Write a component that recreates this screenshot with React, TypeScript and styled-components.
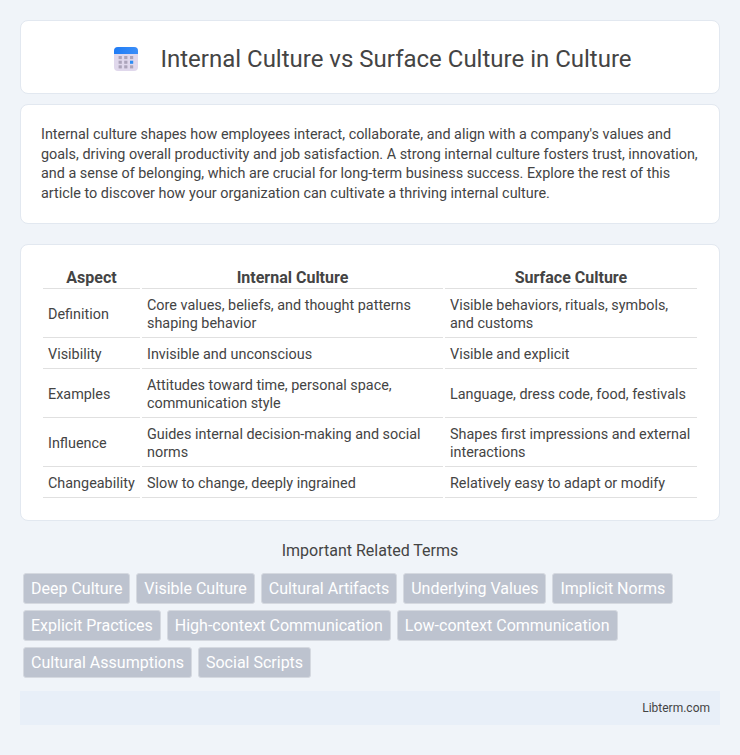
import React from "react";
import styled, { createGlobalStyle } from "styled-components";

const Global = createGlobalStyle`
  html, body { margin: 0; padding: 0; background: #f0f4f9; }
  body { font-family: Roboto, "Liberation Sans", sans-serif; color: #444; }
`;
const Page = styled.div`
  padding: 20px 20px 30px;
  display: flex;
  flex-direction: column;
`;
const Card = styled.section<{ $mb: number }>`
  background: #fff;
  border: 1px solid #e2e8f0;
  border-radius: 8px;
  margin-bottom: ${(p) => p.$mb}px;
`;
const Header = styled(Card)`
  height: 74px;
  box-sizing: border-box;
  padding: 4px 0 0 6px;
  display: flex;
  align-items: center;
  justify-content: center;
  gap: 22px;
`;
const Title = styled.h1`
  margin: 0;
  font-size: 24px;
  font-weight: 400;
  color: #444;
  line-height: 28px;
`;
const Summary = styled(Card)`
  padding: 20px;
  height: 120px;
  box-sizing: border-box;
`;
const SummaryText = styled.p`
  margin: 0;
  font-size: 14.4px;
  line-height: 19.5px;
  color: #444;
`;
const TableCard = styled(Card)`
  padding: 17px 20px 20px;
  height: 277px;
  box-sizing: border-box;
`;
const Table = styled.table`
  width: 100%;
  border-collapse: separate;
  border-spacing: 2px;
  font-size: 14.4px;
  table-layout: fixed;
`;
const Th = styled.th`
  font-size: 16px;
  font-weight: 700;
  color: #444;
  padding: 4px 5px 1px;
  line-height: 19px;
  border-bottom: 1px solid #e0e0e0;
  text-align: center;
`;
const Td = styled.td`
  padding: 6px 5px 4px;
  line-height: 18px;
  color: #444;
  border-bottom: 1px solid #e0e0e0;
  vertical-align: middle;
`;
const TermsTitle = styled.h2`
  margin: 0 0 13px;
  font-size: 16px;
  font-weight: 400;
  line-height: 19px;
  text-align: center;
  color: #444;
`;
const Tags = styled.div`
  display: flex;
  flex-wrap: wrap;
  gap: 6px;
  padding: 0 3px;
  margin-bottom: 13px;
`;
const Tag = styled.span`
  background: #bdc3cf;
  color: #fff;
  border: 1px solid #d5d9e0;
  border-radius: 3px;
  font-size: 16px;
  line-height: 19px;
  padding: 5px 7px;
`;
const Footer = styled.footer`
  background: #e8eff8;
  height: 34px;
  display: flex;
  align-items: center;
  justify-content: flex-end;
  padding: 0 10px;
  font-size: 12px;
  color: #444;
`;

const Icon = () => (
  <svg width="24" height="24" viewBox="0 0 24 24" aria-hidden="true">
    <defs>
      <linearGradient id="calTop" x1="0" y1="0" x2="1" y2="0">
        <stop offset="0" stopColor="#1f7cf5" />
        <stop offset="1" stopColor="#3b8ef8" />
      </linearGradient>
    </defs>
    <rect x="0" y="0" width="24" height="24" rx="4" fill="#e0d8ec" />
    <path d="M0 7V4a4 4 0 0 1 4-4h16a4 4 0 0 1 4 4v3z" fill="url(#calTop)" />
    {[9, 13.7, 18.3].flatMap((y, r) =>
      [4.6, 10.2, 16].map((x, c) => (
        <rect key={`${r}${c}`} x={x} y={y} width="3.2" height="3.1" fill={r === 1 && c === 2 ? "#2c8cf4" : "#aca4ba"} />
      ))
    )}
  </svg>
);

const rows: [string, string, string][] = [
  ["Definition", "Core values, beliefs, and thought patterns shaping behavior", "Visible behaviors, rituals, symbols, and customs"],
  ["Visibility", "Invisible and unconscious", "Visible and explicit"],
  ["Examples", "Attitudes toward time, personal space, communication style", "Language, dress code, food, festivals"],
  ["Influence", "Guides internal decision-making and social norms", "Shapes first impressions and external interactions"],
  ["Changeability", "Slow to change, deeply ingrained", "Relatively easy to adapt or modify"],
];
const terms = ["Deep Culture", "Visible Culture", "Cultural Artifacts", "Underlying Values", "Implicit Norms", "Explicit Practices", "High-context Communication", "Low-context Communication", "Cultural Assumptions", "Social Scripts"];

export default function App() {
  return (
    <Page>
      <Global />
      <Header $mb={10}>
        <Icon />
        <Title>Internal Culture vs Surface Culture in Culture</Title>
      </Header>
      <Summary $mb={20}>
        <SummaryText>
          Internal culture shapes how employees interact, collaborate, and align with a company's values and goals, driving overall productivity and job satisfaction. A strong internal culture fosters trust, innovation, and a sense of belonging, which are crucial for long-term business success. Explore the rest of this article to discover how your organization can cultivate a thriving internal culture.
        </SummaryText>
      </Summary>
      <TableCard $mb={20}>
        <Table>
          <colgroup>
            <col style={{ width: 97 }} />
            <col style={{ width: 301 }} />
            <col />
          </colgroup>
          <thead>
            <tr>
              <Th>Aspect</Th>
              <Th>Internal Culture</Th>
              <Th>Surface Culture</Th>
            </tr>
          </thead>
          <tbody>
            {rows.map((r) => (
              <tr key={r[0]}>
                {r.map((c) => (
                  <Td key={c}>{c}</Td>
                ))}
              </tr>
            ))}
          </tbody>
        </Table>
      </TableCard>
      <TermsTitle>Important Related Terms</TermsTitle>
      <Tags>
        {terms.map((t) => (
          <Tag key={t}>{t}</Tag>
        ))}
      </Tags>
      <Footer>Libterm.com</Footer>
    </Page>
  );
}
